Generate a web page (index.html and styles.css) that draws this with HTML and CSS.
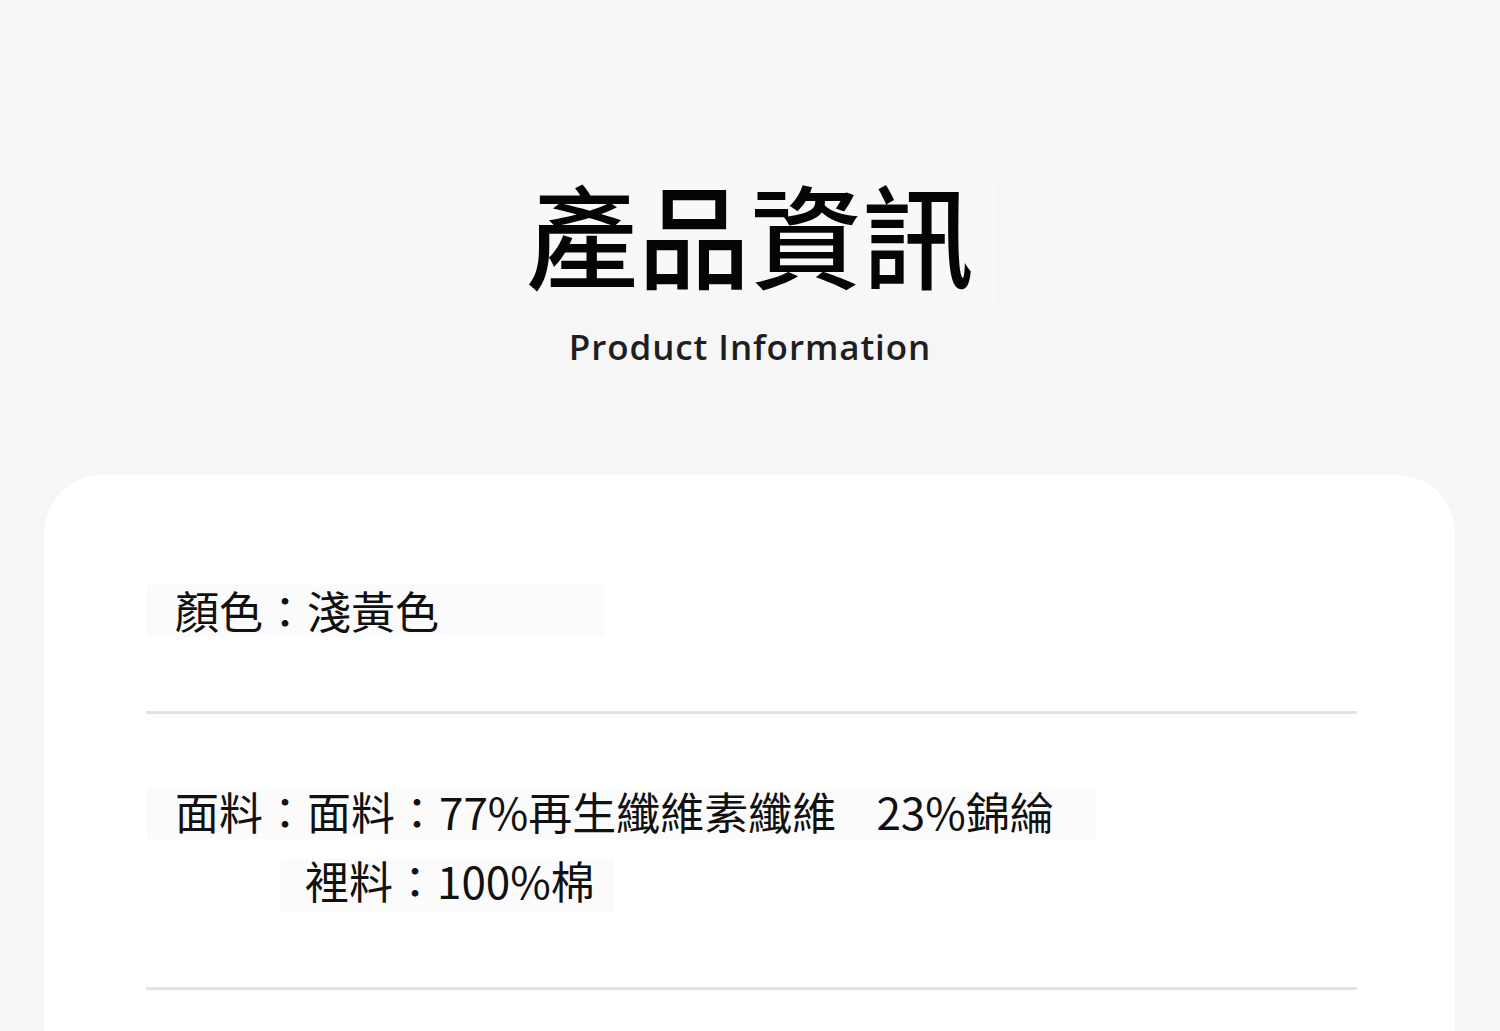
FILE: index.html
```html
<!DOCTYPE html>
<html lang="zh-Hant">
<head>
<meta charset="utf-8">
<link rel="stylesheet" href="styles.css">
</head>
<body>
<header class="header">
  <h1 class="title">產品資訊</h1>
  <p class="subtitle">Product Information</p>
</header>
<main class="card">
  <section class="row row-color">
    <div class="line line-color">顏色：淺黃色</div>
  </section>
  <hr class="divider">
  <section class="row row-fabric">
    <div class="line line-fabric">面料：面料：77%再生纖維素纖維<span class="extra">23%錦綸</span></div>
    <div class="line line-lining">裡料：100%棉</div>
  </section>
  <hr class="divider">
  <section class="row row-empty"></section>
</main>
</body>
</html>
```

FILE: styles.css
```css
html, body {
  margin: 0;
  padding: 0;
}
body {
  background: #f6f6f6;
  font-family: "Noto Sans CJK TC", "Noto Sans", sans-serif;
  color: #111;
  overflow: hidden;
}
.header {
  display: flex;
  flex-direction: column;
  align-items: center;
  padding-top: 183px;
}
.title {
  margin: 0;
  padding: 0 22px 24px;
  background: #f8f8f8;
  font-size: 112px;
  font-weight: 500;
  line-height: 98px;
  color: #050505;
  letter-spacing: 0;
}
.subtitle {
  margin: 22px 0 0;
  font-family: "Open Sans", "Noto Sans", sans-serif;
  font-size: 35px;
  font-weight: 600;
  line-height: 40px;
  letter-spacing: 0.9px;
  color: #1e1e1e;
}
.card {
  margin: 108px 45px 0 44px;
  background: #fff;
  border-radius: 58px 58px 0 0;
  padding: 104px 98px 0 102px;
  height: 600px;
}
.row {
  display: flex;
  flex-direction: column;
  align-items: flex-start;
}
.line {
  font-size: 44px;
  line-height: 52px;
  font-weight: 400;
  color: #111;
  background: #fbfbfb;
  box-sizing: border-box;
  white-space: nowrap;
}
.line-color {
  width: 458px;
  padding-left: 29px;
  margin-top: 6px;
  line-height: 50px;
  padding-bottom: 2px;
}
.row-color {
  padding-bottom: 74px;
}
.divider {
  margin: 0;
  border: 0;
  height: 3px;
  background: #e3e3e3;
}
.row-fabric {
  padding-top: 73px;
  padding-bottom: 75px;
}
.line-fabric {
  width: 950px;
  padding-left: 29px;
  line-height: 48px;
  padding-bottom: 4px;
}
.extra {
  margin-left: 40px;
}
.line-lining {
  margin-top: 19px;
  margin-left: 135px;
  width: 333px;
  padding-left: 24px;
  line-height: 44px;
  padding-bottom: 10px;
}
```
